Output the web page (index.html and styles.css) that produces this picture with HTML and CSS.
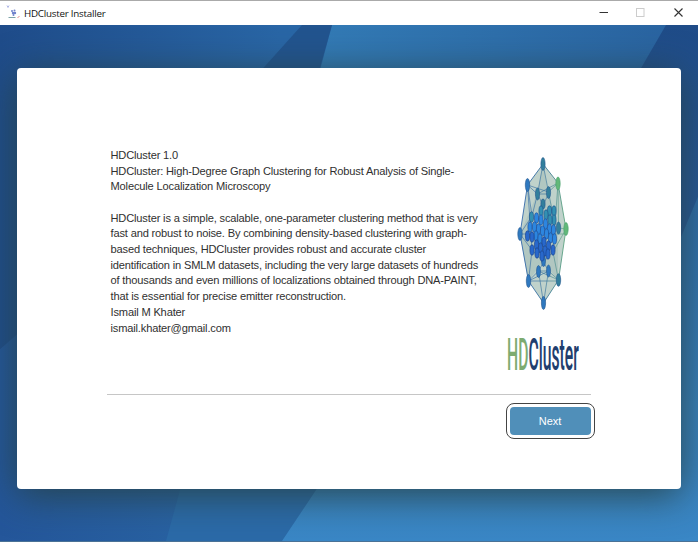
FILE: index.html
```
<!DOCTYPE html>
<html lang="en">
<head>
<meta charset="utf-8">
<title>HDCluster Installer</title>
<link rel="stylesheet" href="styles.css">
</head>
<body>
<div class="window">
  <header class="titlebar">
    <svg class="app-icon" viewBox="0 0 16 16">
      <g fill="#6f82cc"><circle cx="6" cy="6" r="1"/><circle cx="8.500" cy="5.500" r="1"/><circle cx="7" cy="8" r="1.200"/><circle cx="9" cy="8" r="1.200"/><circle cx="7.500" cy="10" r="1"/></g>
      <path d="M1 .5l1 2M3 .5l-1 2" stroke="#9aa4e0" stroke-width=".8" fill="none"/>
      <path d="M2.500 12.500h7" stroke="#7fa4aa"/>
      <path d="M11.500 13l2-2" stroke="#e08a8a"/>
    </svg>
    <span class="title">HDCluster Installer</span>
    <svg class="controls" viewBox="0 0 100 24" fill="none">
      <path d="M1.500 11.500h8.500" stroke="#333"/>
      <rect x="38.500" y="7.500" width="7.500" height="8" stroke="#ccc"/>
      <path d="M76.500 7.500l8 8M84.500 7.500l-8 8" stroke="#333" stroke-width="1.100"/>
    </svg>
  </header>
  <main class="stage">
    <svg class="backdrop" viewBox="0 25 698 517" preserveAspectRatio="none">
      <defs>
        <linearGradient id="left" x1="0" y1="0" x2="1" y2="0"><stop offset="0" stop-color="#1f4c8a"/><stop offset=".4" stop-color="#2966a6"/><stop offset="1" stop-color="#2a69a6"/></linearGradient>
        <linearGradient id="right" x1="0" y1="0" x2="1" y2="0"><stop offset="0" stop-color="#347eb9"/><stop offset="1" stop-color="#29629f"/></linearGradient>
        <linearGradient id="low" x1="0" y1="0" x2="1" y2="0"><stop offset="0" stop-color="#24569a"/><stop offset=".5" stop-color="#2963a3"/><stop offset="1" stop-color="#2c6dab"/></linearGradient>
        <linearGradient id="bright" x1="0" y1="0" x2="0" y2="1"><stop offset="0" stop-color="#2e6ba8"/><stop offset=".6" stop-color="#3880bb"/><stop offset="1" stop-color="#3a87c6"/></linearGradient>
        <linearGradient id="edge" x1="0" y1="0" x2="0" y2="1"><stop offset="0" stop-color="#1f4c88"/><stop offset="1" stop-color="#28599a"/></linearGradient>
      </defs>
      <rect y="25" width="698" height="517" fill="url(#left)"/>
      <path d="M332 25H698V300H260z" fill="url(#right)"/>
      <path d="M302 25H332L318 75H257z" fill="#22548f"/>
      <path d="M666 25H698V260H530z" fill="url(#edge)"/>
      <path d="M0 350L40 315H400V542H0z" fill="url(#low)"/>
      <path d="M183 480L166 542H282L325 480z" fill="#2b6aa8"/>
      <path d="M282 542L450 290L640 260L680 240L698 197V542z" fill="url(#bright)"/>
    </svg>
    <section class="card">
      <div class="content">
        <div class="intro">
          <div class="copy">
            <p>HDCluster 1.0</p>
            <p>HDCluster: High-Degree Graph Clustering for Robust Analysis of Single-<br>Molecule Localization Microscopy</p>
            <p class="description">HDCluster is a simple, scalable, one-parameter clustering method that is very<br>fast and robust to noise. By combining density-based clustering with graph-<br>based techniques, HDCluster provides robust and accurate cluster<br>identification in SMLM datasets, including the very large datasets of hundreds<br>of thousands and even millions of localizations obtained through DNA-PAINT,<br>that is essential for precise emitter reconstruction.</p>
            <p>Ismail M Khater</p>
            <p>ismail.khater@gmail.com</p>
          </div>
          <div class="brand">
          <svg class="logo" viewBox="500 148 90 184">
            <defs>
              <linearGradient id="web" x1="518" x2="568" y1="0" y2="0" gradientUnits="userSpaceOnUse"><stop offset="0" stop-color="#3468ae"/><stop offset=".55" stop-color="#39749c"/><stop offset="1" stop-color="#66ae7c"/></linearGradient>
              <ellipse id="cell" rx="2.100" ry="5.200"/>
            </defs>
            <path d="M543 164L558 183L566 229L558.500 280L543.500 303L528.500 281L520 234L527.500 185z" fill="#c0d2cb"/>
            <path d="M543 164L537 194L520 234L528 281L543 262L558 280L558 228L548 192z" fill="#a9c2bb" opacity=".65"/>
            <g fill="none" stroke="url(#web)" stroke-width=".65">
              <path d="M543 164L558 183L566 229L558.500 280L543.500 303L528.500 281L520 234L527.500 185z" stroke-width=".9"/>
              <path d="M543 164L537.500 194L527.500 185L532 216L520 234L532 250L528.500 281L538.500 271L543.500 303L548.500 271L558.500 280L553 252L566 229L558.500 228L558 183L548.500 192L543 164M537.500 194H548.500L543 205zM537.500 194L558 183M527.500 185L548.500 192M528.500 281L548.500 271M558.500 280L538.500 271L543.500 262L548.500 271H538.500M528.500 281H558.500M520 234H566M527.500 185L532 250M558 183L553 252M537.500 194L532 216M548.500 192L553 215M532 250L543.500 262L553 252"/>
            </g>
            <g stroke="#24588e" stroke-width=".6">
              <g fill="#327f9c"><ellipse cx="543" cy="164" rx="2.100" ry="6.500"/><ellipse cx="537.500" cy="194" rx="2.100" ry="6"/><ellipse cx="548.500" cy="192.500" rx="2.100" ry="6"/><ellipse cx="543" cy="204" rx="2.100" ry="5"/><ellipse cx="558.500" cy="280" rx="2.200" ry="6.300"/><ellipse cx="558.500" cy="228" rx="2.200" ry="6"/></g>
              <g fill="#3079bf"><ellipse cx="527.500" cy="185" rx="2.200" ry="6.500"/><ellipse cx="520" cy="234" rx="2.200" ry="6.500"/><ellipse cx="528.500" cy="281" rx="2.200" ry="6.500"/><ellipse cx="538.500" cy="271.500" rx="2" ry="6"/><ellipse cx="548.500" cy="271" rx="2" ry="6"/><ellipse cx="543.500" cy="303" rx="2.100" ry="6.500"/><ellipse cx="543.500" cy="261" rx="2" ry="5.500"/></g>
            </g>
            <g fill="#62b879" stroke="#45a069" stroke-width=".6"><ellipse cx="558" cy="183.500" rx="2.200" ry="6.500"/><ellipse cx="566" cy="229" rx="2.200" ry="6.500"/></g>
            <g fill="#3390b2" stroke="#1b4e88" stroke-width=".6">
              <use href="#cell" x="541" y="211"/><use href="#cell" x="549.500" y="211"/><use href="#cell" x="554" y="211"/><use href="#cell" x="531.500" y="217"/><use href="#cell" x="546" y="215"/><use href="#cell" x="554" y="220"/><use href="#cell" x="550" y="220"/>
            </g>
            <g fill="#2d86df" stroke="#1a4890" stroke-width=".6">
              <use href="#cell" x="536.500" y="218"/><use href="#cell" x="541" y="220"/><use href="#cell" x="545.500" y="224"/><use href="#cell" x="530" y="227"/><use href="#cell" x="534.500" y="227"/><use href="#cell" x="538.500" y="229"/><use href="#cell" x="542.500" y="231"/><use href="#cell" x="549.500" y="229"/><use href="#cell" x="553.500" y="230"/><use href="#cell" x="546.500" y="234"/><use href="#cell" x="550.500" y="238"/><use href="#cell" x="554.500" y="239"/><use href="#cell" x="536" y="236"/><use href="#cell" x="540" y="239"/>
            </g>
            <g fill="#2868cb" stroke="#183f86" stroke-width=".6">
              <use href="#cell" x="527.500" y="236"/><use href="#cell" x="532" y="237"/><use href="#cell" x="544" y="242"/><use href="#cell" x="548.500" y="246"/><use href="#cell" x="553" y="250"/><use href="#cell" x="532" y="250"/><use href="#cell" x="536.500" y="245"/><use href="#cell" x="540.500" y="248"/><use href="#cell" x="545" y="251"/><use href="#cell" x="537" y="253"/><use href="#cell" x="542" y="256"/><use href="#cell" x="548" y="254"/>
            </g>
          </svg>
          <div class="wordmark"><span class="wordmark-hd">HD</span><span class="wordmark-cluster">Cluster</span></div>
          </div>
        </div>
        <footer class="actions"><button class="next" type="button">Next</button></footer>
      </div>
    </section>
  </main>
</div>
</body>
</html>
```
FILE: styles.css
```
* { box-sizing: border-box; }
body { margin: 0; overflow: hidden; }
.window {
  width: 698px;
  height: 542px;
  display: flex;
  flex-direction: column;
  border-top: 1px solid #aaa;
  border-bottom: 1px solid #4a7296;
  font-family: "Liberation Sans", Arial, sans-serif;
}
.titlebar {
  height: 24px;
  flex: none;
  display: flex;
  align-items: center;
  padding-left: 6px;
  background: #fff;
}
.app-icon { width: 16px; height: 16px; margin-right: 2px; }
.title {
  font: 9.8px "Open Sans", "Noto Sans", sans-serif;
  color: #111;
  letter-spacing: -.24px;
}
.controls { width: 100px; height: 24px; margin-left: auto; margin-right: 0; }
.stage {
  flex: 1;
  display: grid;
  padding: 43px 17px 52px 16.500px;
  position: relative;
}
.backdrop { position: absolute; inset: 0; width: 100%; height: 100%; }
.card {
  position: relative;
  background: #fff;
  border-radius: 4px;
  box-shadow: 0 6px 38px rgba(38, 66, 72, .95);
  padding: 79px 90px 0;
}
.content { width: 484px; }
.intro {
  height: 247.500px;
  display: flex;
  justify-content: space-between;
  padding-left: 4px;
  border-bottom: 1px solid #c6c6c6;
}
.copy {
  padding-top: 1px;
  font-size: 11.100px;
  line-height: 15.680px;
  letter-spacing: -.165px;
  color: #303030;
  white-space: nowrap;
}
.copy p { margin: 0; }
.copy .description { margin-top: 15.680px; }
.brand { width: 90px; flex: none; margin-right: 1px; padding-top: 1px; }
.logo { display: block; width: 90px; height: 184px; }
.wordmark {
  display: flex;
  width: max-content;
  margin: 1px 0 0 7.500px;
  font: 500 44px/44px Roboto, "Liberation Sans", sans-serif;
  transform: scaleX(.357);
  transform-origin: 0 0;
}
.wordmark-hd { color: #7dab70; }
.wordmark-cluster { color: #213e6e; }
.actions { display: flex; justify-content: flex-end; padding-top: 12px; }
.next {
  width: 81px;
  height: 28px;
  padding: 0;
  border: 0;
  border-radius: 4px;
  outline: 1px solid #444;
  outline-offset: 3px;
  background: #508fb9;
  color: #fff;
  font: 11px "Liberation Sans", Arial, sans-serif;
}
```
